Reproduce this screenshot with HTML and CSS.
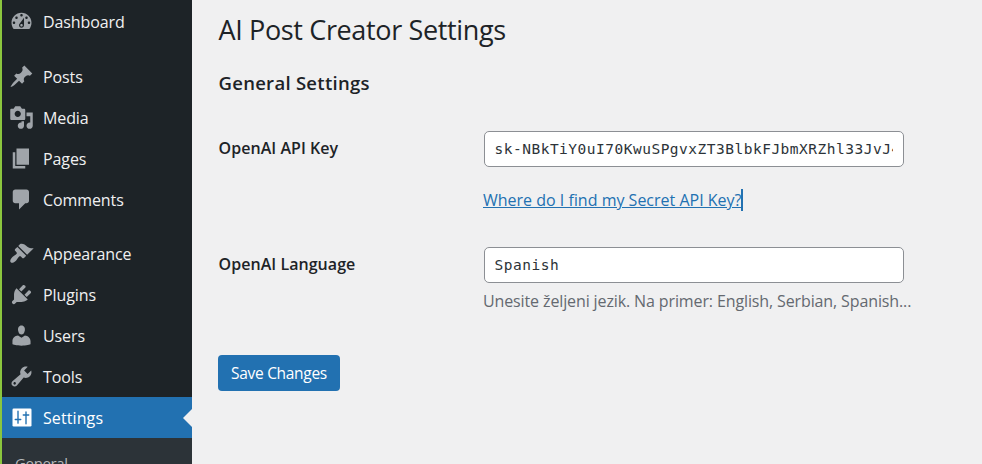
FILE: index.html
```
<!DOCTYPE html>
<html lang="en">
<head>
<meta charset="utf-8">
<title>AI Post Creator Settings</title>
<link rel="stylesheet" href="styles.css">
</head>
<body>
<div class="admin">
  <nav class="menu">
    <a class="item"><svg class="icon" viewBox="0 0 20 20"><path fill-rule="evenodd" d="M3.76 16h12.48c1.1-1.37 1.76-3.11 1.76-5 0-4.42-3.58-8-8-8s-8 3.58-8 8c0 1.89.66 3.63 1.76 5zM10 4c.55 0 1 .45 1 1s-.45 1-1 1-1-.45-1-1 .45-1 1-1zM6 6c.55 0 1 .45 1 1s-.45 1-1 1-1-.45-1-1 .45-1 1-1zm8 0c.55 0 1 .45 1 1s-.45 1-1 1-1-.45-1-1 .45-1 1-1zm-5.37 5.55L12 7v6c0 1.1-.9 2-2 2s-2-.9-2-2c0-.57.24-1.08.63-1.45zM4 10c.55 0 1 .45 1 1s-.45 1-1 1-1-.45-1-1 .45-1 1-1zm12 0c.55 0 1 .45 1 1s-.45 1-1 1-1-.45-1-1 .45-1 1-1zm-5 3c0-.55-.45-1-1-1s-1 .45-1 1 .45 1 1 1 1-.45 1-1z"/></svg><span>Dashboard</span></a>
    <a class="item first"><svg class="icon" viewBox="0 0 20 20"><path d="M10.44 3.02l1.82-1.82 6.36 6.35-1.83 1.82c-1.05-.68-2.48-.57-3.41.36l-.75.75c-.92.93-1.04 2.35-.35 3.41l-1.83 1.82-2.41-2.41-2.8 2.79c-.42.42-3.38 2.71-3.8 2.29s1.86-3.39 2.28-3.81l2.79-2.79L4.1 9.36l1.83-1.82c1.05.69 2.48.57 3.4-.36l.75-.75c.93-.92 1.05-2.35.36-3.41z"/></svg><span>Posts</span></a>
    <a class="item"><svg class="icon" viewBox="0 0 20 20"><path fill-rule="evenodd" d="M13 11V4c0-.55-.45-1-1-1h-1.67L9 1H5L3.67 3H2c-.55 0-1 .45-1 1v7c0 .55.45 1 1 1h10c.55 0 1-.45 1-1zM7 4.5c1.38 0 2.5 1.12 2.5 2.5S8.38 9.5 7 9.5 4.5 8.38 4.5 7 5.62 4.5 7 4.5zM14 6h5v10.5c0 1.38-1.12 2.5-2.5 2.5S14 17.88 14 16.5s1.12-2.5 2.5-2.5c.17 0 .34.02.5.05V9h-3V6zm-4 8.05V13h2v3.5c0 1.38-1.12 2.5-2.5 2.5S7 17.88 7 16.5 8.12 14 9.5 14c.17 0 .34.02.5.05z"/></svg><span>Media</span></a>
    <a class="item"><svg class="icon" viewBox="0 0 20 20"><path d="M6 15V2h10v13H6zm-1 1h8v2H3V5h2v11z"/></svg><span>Pages</span></a>
    <a class="item"><svg class="icon" viewBox="0 0 20 20"><path d="M5 2h9c1.1 0 2 .9 2 2v7c0 1.1-.9 2-2 2h-1l-5 5v-5H5c-1.1 0-2-.9-2-2V4c0-1.1.9-2 2-2z"/></svg><span>Comments</span></a>
    <a class="item first"><svg class="icon" viewBox="0 0 20 20"><path d="M14.48 11.06L7.41 3.99l1.5-1.5c.5-.56 2.3-.47 3.51.32 1.21.8 1.43 1.28 2.91 2.1 1.18.64 2.45 1.26 4.45.85zm-.71.71L6.7 4.7 4.93 6.47c-.39.39-.39 1.02 0 1.41l1.06 1.06c.39.39.39 1.03 0 1.42-.6.6-1.43 1.11-2.21 1.69-.35.26-.7.53-1.01.84C1.43 14.23.4 16.08 1.4 17.07c.99 1 2.84-.03 4.18-1.36.31-.31.58-.66.85-1.02.57-.78 1.08-1.61 1.69-2.21.39-.39 1.02-.39 1.41 0l1.06 1.06c.39.39 1.02.39 1.41 0z"/></svg><span>Appearance</span></a>
    <a class="item"><svg class="icon" viewBox="0 0 20 20"><path d="M13.11 4.36L9.87 7.6 8 5.73l3.24-3.24c.35-.34 1.05-.2 1.56.32.52.51.66 1.21.31 1.55zm-8 1.77l.91-1.12 9.01 9.01-1.19.84c-.71.71-2.63 1.16-3.82 1.16H6.14L4.9 17.26c-.59.59-1.54.59-2.12 0-.59-.58-.59-1.53 0-2.12l1.24-1.24v-3.88c0-1.13.4-3.19 1.09-3.89zm7.26 3.97l3.24-3.24c.34-.35 1.04-.21 1.55.31.52.51.66 1.21.31 1.55l-3.24 3.25z"/></svg><span>Plugins</span></a>
    <a class="item"><svg class="icon" viewBox="0 0 20 20"><path d="M10 9.25c-2.27 0-2.73-3.44-2.73-3.44C7 4.02 7.82 2 9.97 2c2.16 0 2.98 2.02 2.71 3.81 0 0-.41 3.44-2.68 3.44zm0 2.57L12.72 10c2.39 0 4.52 2.33 4.52 4.53v2.49s-3.65 1.13-7.24 1.13c-3.65 0-7.24-1.13-7.24-1.13v-2.49c0-2.25 1.94-4.48 4.47-4.48z"/></svg><span>Users</span></a>
    <a class="item"><svg class="icon" viewBox="0 0 20 20"><path fill-rule="evenodd" d="M16.68 9.77c-1.34 1.34-3.3 1.67-4.95.99l-5.41 6.52c-.99.99-2.59.99-3.58 0s-.99-2.59 0-3.57l6.52-5.42c-.68-1.65-.35-3.61.99-4.95 1.28-1.28 3.12-1.62 4.72-1.06l-2.89 2.89 2.82 2.82 2.86-2.87c.53 1.58.18 3.39-1.08 4.65zM3.81 16.21c.4.39 1.04.39 1.43 0 .4-.4.4-1.04 0-1.43-.39-.4-1.03-.4-1.43 0-.39.39-.39 1.03 0 1.43z"/></svg><span>Tools</span></a>
    <a class="item current"><svg class="icon" viewBox="0 0 20 20"><rect x="2.800" y="2.800" width="15.200" height="14.400" rx="1"/><path class="sliders" d="M7.200 5v9.500M5 11.600h4.400M13.600 5.500V15M11.400 8h4.400"/></svg><span>Settings</span></a>
    <div class="submenu"><a>General</a></div>
  </nav>
  <main class="content">
    <h1>AI Post Creator Settings</h1>
    <h2>General Settings</h2>
    <form class="form">
      <label class="label" for="key">OpenAI API Key</label>
      <div class="field key-field">
        <input class="input" id="key" type="text" value="sk-NBkTiY0uI70KwuSPgvxZT3BlbkFJbmXRZhl33JvJ4">
        <p class="help"><a class="link">Where do I find my Secret API Key?</a></p>
      </div>
      <label class="label" for="language">OpenAI Language</label>
      <div class="field">
        <input class="input" id="language" type="text" value="Spanish">
        <p class="description">Unesite željeni jezik. Na primer: English, Serbian, Spanish...</p>
      </div>
    </form>
    <button class="save" type="button">Save Changes</button>
  </main>
</div>
</body>
</html>
```
FILE: styles.css
```
* { box-sizing: border-box; }
body {
  margin: 0;
  background: #f0f0f1;
  color: #1d2327;
  font-family: "Open Sans", "Noto Sans", sans-serif;
  font-size: 16px;
}
.admin {
  display: flex;
  height: 464px;
  overflow: hidden;
}
.menu {
  flex: none;
  width: 192px;
  padding-top: 1px;
  border-left: 2px solid #8bc63e;
  background: #1d2327;
  overflow: hidden;
}
.item {
  display: flex;
  align-items: center;
  height: 41px;
  padding-left: 7px;
  gap: 9px;
  color: #f0f0f1;
  letter-spacing: -0.1px;
}
.item.first { margin-top: 14px; }
.item.first ~ .item.first { margin-top: 13px; }
.icon {
  flex: none;
  width: 25px;
  height: 25px;
  fill: #a0a5aa;
}
.current {
  background: #2271b1;
  color: #fff;
  letter-spacing: 0.1px;
}
.current .icon { fill: #fff; }
.sliders {
  fill: none;
  stroke: #2271b1;
  stroke-width: 1.100;
  stroke-linecap: round;
}
.current::after {
  content: "";
  margin-left: auto;
  border: 9px solid transparent;
  border-left: 0;
  border-right-color: #f0f0f1;
}
.submenu {
  height: 60px;
  padding: 14px 0 0 13px;
  background: #2c3338;
  color: #b5b8bb;
  font-size: 15px;
  letter-spacing: -0.35px;
  line-height: 22px;
}
.content {
  flex: 1;
  padding: 12px 0 0 26.500px;
}
h1 {
  margin: 0;
  font-size: 27px;
  font-weight: 400;
  letter-spacing: -0.36px;
  line-height: 36px;
}
h2 {
  margin: 23px 0 0;
  font-size: 18.500px;
  font-weight: 600;
  letter-spacing: 0.28px;
  line-height: 24px;
}
.form {
  display: grid;
  grid-template-columns: 265.500px 420px;
  margin-top: 36px;
}
.label {
  padding-top: 6px;
  font-size: 16px;
  font-weight: 600;
  letter-spacing: 0.05px;
  line-height: 22px;
}
.key-field { height: 116px; }
.input {
  display: block;
  width: 420px;
  height: 36px;
  padding: 0 10px 0 9.500px;
  border: 1px solid #8c8f94;
  border-radius: 5px;
  background: #fff;
  color: #2c3338;
  font-family: "DejaVu Sans Mono", monospace;
  font-size: 14.500px;
  letter-spacing: 0.5px;
}
.help {
  margin: 22px 0 0 -1px;
  line-height: 22px;
}
.link {
  display: inline-block;
  border-right: 2px solid #2271b1;
  color: #2271b1;
  text-decoration: underline;
}
.description {
  margin: 7px 0 0 -1px;
  color: #646970;
  letter-spacing: -0.12px;
  line-height: 22px;
  white-space: nowrap;
}
.save {
  display: block;
  width: 122px;
  height: 36px;
  margin: 43px 0 0 -0.500px;
  padding: 0;
  border: 0;
  border-radius: 4px;
  background: #2271b1;
  color: #fff;
  font: inherit;
  font-size: 15.500px;
  letter-spacing: -0.3px;
}
```
